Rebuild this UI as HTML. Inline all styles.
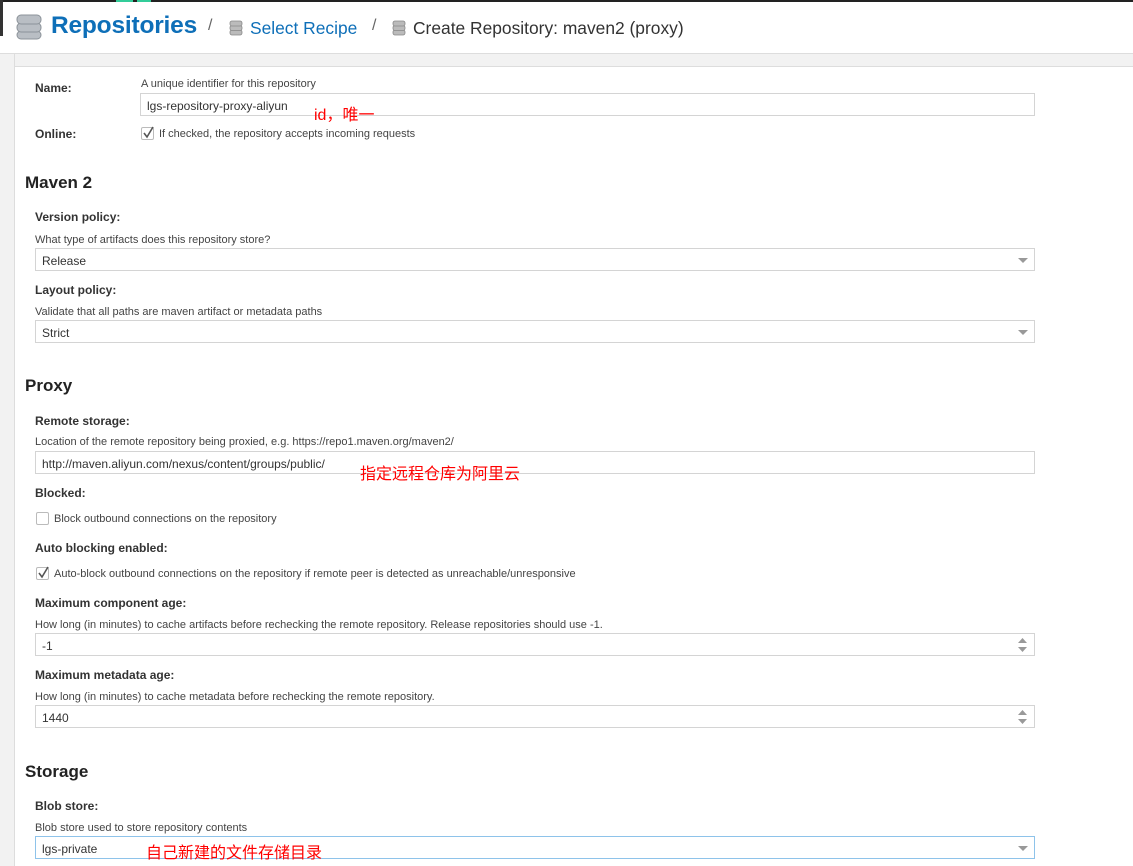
<!DOCTYPE html>
<html><head><meta charset="utf-8"><style>
*{margin:0;padding:0;box-sizing:border-box}
body{width:1133px;height:866px;overflow:hidden;background:#fff;font-family:"Liberation Sans","Noto Sans CJK SC",sans-serif;color:#333;position:relative}
.a{position:absolute;white-space:nowrap}
.lbl{font-size:12px;font-weight:bold;color:#333}
.help{font-size:11px;color:#444}
.inp{position:absolute;left:35px;width:1000px;height:23px;border:1px solid #d4d4d4;background:#fff;font-size:12px;color:#333;padding:5px 6px}
.h2{font-size:17px;font-weight:bold;color:#222}
.arr{position:absolute;right:6px;top:9px;width:0;height:0;border-left:5px solid transparent;border-right:5px solid transparent;border-top:5px solid #999}
.sp{position:absolute;right:7px;top:4px;width:9px;height:14px}
.cb{position:absolute;width:13px;height:13px;border:1px solid #bbb;border-radius:2px;background:#fff}
.red{color:#f00;font-size:16px}
</style></head><body>
<div class="a" style="left:0;top:0;width:1133px;height:2px;background:#222"></div>
<div class="a" style="left:0;top:0;width:3px;height:36px;background:#333"></div>
<div class="a" style="left:116px;top:0;width:17px;height:2px;background:#3c9"></div>
<div class="a" style="left:137px;top:0;width:14px;height:2px;background:#3c9"></div>
<div class="a" style="left:0;top:53px;width:1133px;height:1px;background:#ddd"></div>
<div class="a" style="left:0;top:54px;width:1133px;height:12px;background:#f2f2f2"></div>
<div class="a" style="left:0;top:66px;width:1133px;height:1px;background:#ddd"></div>
<div class="a" style="left:0;top:54px;width:15px;height:812px;background:#f2f2f2;border-right:1px solid #ddd"></div>

<svg class="a" style="left:16px;top:12px" width="26" height="29" viewBox="0 0 26 29">
<g fill="#b9bec4" stroke="#8c939a" stroke-width="1"><rect x="1" y="19" width="24" height="8" rx="4"/><rect x="1" y="11" width="24" height="9" rx="4"/><rect x="1" y="3" width="24" height="9" rx="4"/></g></svg>
<div class="a" style="left:51px;top:12px;font-size:24.5px;font-weight:bold;color:#0e6fb8;letter-spacing:-0.2px">Repositories</div>
<div class="a" style="left:208px;top:17px;font-size:16px;color:#666">/</div>
<svg class="a" style="left:229px;top:20px" width="14" height="16" viewBox="0 0 14 16"><g fill="#bbb" stroke="#888" stroke-width=".8"><rect x="1" y="10" width="12" height="5" rx="2"/><rect x="1" y="5.5" width="12" height="5" rx="2"/><rect x="1" y="1" width="12" height="5" rx="2"/></g></svg>
<div class="a" style="left:250px;top:18px;font-size:17.4px;color:#0e6fb8">Select Recipe</div>
<div class="a" style="left:372px;top:17px;font-size:16px;color:#666">/</div>
<svg class="a" style="left:392px;top:20px" width="14" height="16" viewBox="0 0 14 16"><g fill="#bbb" stroke="#888" stroke-width=".8"><rect x="1" y="10" width="12" height="5" rx="2"/><rect x="1" y="5.5" width="12" height="5" rx="2"/><rect x="1" y="1" width="12" height="5" rx="2"/></g></svg>
<div class="a" style="left:413px;top:18px;font-size:17.4px;color:#333">Create Repository: maven2 (proxy)</div>

<div class="a lbl" style="left:35px;top:81px">Name:</div>
<div class="a help" style="left:141px;top:78px">A unique identifier for this repository</div>
<div class="inp" style="left:140px;width:895px;top:93px">lgs-repository-proxy-aliyun</div>
<div class="a red" style="left:314px;top:101px">id，唯一</div>
<div class="a lbl" style="left:35px;top:127px">Online:</div>
<div class="cb" style="left:141px;top:127px"></div><svg class="a" style="left:142px;top:126px" width="13" height="13" viewBox="0 0 13 13"><path d="M2 7L5 11L11 1" stroke="#555" stroke-width="1.6" fill="none"/></svg>
<div class="a help" style="left:159px;top:128px">If checked, the repository accepts incoming requests</div>

<div class="a h2" style="left:25px;top:173px">Maven 2</div>
<div class="a lbl" style="left:35px;top:210px">Version policy:</div>
<div class="a help" style="left:35px;top:234px">What type of artifacts does this repository store?</div>
<div class="inp" style="top:248px">Release<div class="arr"></div></div>
<div class="a lbl" style="left:35px;top:283px">Layout policy:</div>
<div class="a help" style="left:35px;top:306px">Validate that all paths are maven artifact or metadata paths</div>
<div class="inp" style="top:320px">Strict<div class="arr"></div></div>

<div class="a h2" style="left:25px;top:376px">Proxy</div>
<div class="a lbl" style="left:35px;top:414px">Remote storage:</div>
<div class="a help" style="left:35px;top:436px">Location of the remote repository being proxied, e.g. https://repo1.maven.org/maven2/</div>
<div class="inp" style="top:451px">http://maven.aliyun.com/nexus/content/groups/public/</div>
<div class="a red" style="left:360px;top:460px">指定远程仓库为阿里云</div>
<div class="a lbl" style="left:35px;top:486px">Blocked:</div>
<div class="cb" style="left:36px;top:512px"></div>
<div class="a help" style="left:54px;top:513px">Block outbound connections on the repository</div>
<div class="a lbl" style="left:35px;top:541px">Auto blocking enabled:</div>
<div class="cb" style="left:36px;top:567px"></div><svg class="a" style="left:37px;top:566px" width="13" height="13" viewBox="0 0 13 13"><path d="M2 7L5 11L11 1" stroke="#555" stroke-width="1.6" fill="none"/></svg>
<div class="a help" style="left:54px;top:568px">Auto-block outbound connections on the repository if remote peer is detected as unreachable/unresponsive</div>
<div class="a lbl" style="left:35px;top:596px">Maximum component age:</div>
<div class="a help" style="left:35px;top:619px">How long (in minutes) to cache artifacts before rechecking the remote repository. Release repositories should use -1.</div>
<div class="inp" style="top:633px">-1<svg class="sp" viewBox="0 0 9 14"><path d="M0 5L4.5 0L9 5Z M0 9L4.5 14L9 9Z" fill="#999"/></svg></div>
<div class="a lbl" style="left:35px;top:668px">Maximum metadata age:</div>
<div class="a help" style="left:35px;top:691px">How long (in minutes) to cache metadata before rechecking the remote repository.</div>
<div class="inp" style="top:705px">1440<svg class="sp" viewBox="0 0 9 14"><path d="M0 5L4.5 0L9 5Z M0 9L4.5 14L9 9Z" fill="#999"/></svg></div>

<div class="a h2" style="left:25px;top:762px">Storage</div>
<div class="a lbl" style="left:35px;top:799px">Blob store:</div>
<div class="a help" style="left:35px;top:822px">Blob store used to store repository contents</div>
<div class="inp" style="top:836px;border-color:#8ec3ea">lgs-private<div class="arr"></div></div>
<div class="a red" style="left:146px;top:839px">自己新建的文件存储目录</div>
</body></html>
